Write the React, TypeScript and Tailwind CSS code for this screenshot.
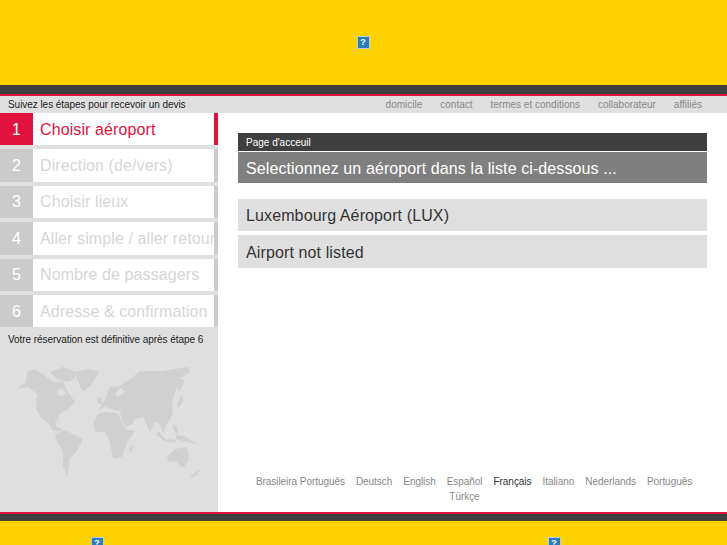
const font = "font-['Liberation_Sans',Arial,sans-serif]";

const steps = [
  "Choisir aéroport",
  "Direction (de/vers)",
  "Choisir lieux",
  "Aller simple / aller retour",
  "Nombre de passagers",
  "Adresse & confirmation",
];

const navLinks = ["domicile", "contact", "termes et conditions", "collaborateur", "affiliés"];

const languages = [
  "Brasileira Português",
  "Deutsch",
  "English",
  "Español",
  "Français",
  "Italiano",
  "Nederlands",
  "Português",
];

function BrokenImage() {
  return (
    <span className="flex h-[13px] w-[13px] shrink-0 items-center justify-center border border-[#b4cde0] bg-[#2a7cbd] text-[9px] leading-none font-bold text-white">
      ?
    </span>
  );
}

function WorldMap() {
  return (
    <svg viewBox="0 348 218 164" className="h-[164px] w-[218px]" fill="#d0d0d0">
      {/* north america */}
      <path d="M17 389 25 384 28 372 35 370 48 379 55 383 63 382 66 390 75 403 68 410 60 415 55 423 57 428 63 430 60 432 53 432 49 425 42 420 36 410 37 395 28 388Z" />
      <path d="M50 373 63 368 75 372 75 380 67 383 57 380Z" />
      <path d="M75 373 90 370 99 373 92 385 83 393 78 383Z" />
      <path d="M50 418 57 420 60 423 54 421Z" />
      {/* south america */}
      <path d="M55 435 65 431 83 440 78 450 70 460 67 477 63 467 63 452 57 443Z" />
      {/* eurasia */}
      <path d="M98 412 105 400 110 388 120 387 133 378 140 372 162 372 188 368 190 373 180 380 185 380 180 393 177 388 172 403 173 415 165 428 164 436 160 425 155 423 150 433 143 418 135 420 133 425 125 428 120 415 112 410 105 408Z" />
      <path d="M97 400 101 398 102 405 98 405Z" />
      <path d="M178 403 182 396 183 403 177 410Z" />
      {/* africa */}
      <path d="M93 425 98 415 110 412 118 415 125 430 135 432 127 443 122 458 113 460 110 443 105 433 96 433Z" />
      <path d="M130 448 133 445 132 451 129 453Z" />
      {/* islands */}
      <path d="M158 432 167 442 164 442 157 436Z" />
      <path d="M167 440 176 441 176 444 168 443Z" />
      <path d="M173 425 177 427 178 435 174 432Z" />
      <path d="M176 436 184 437 197 445 186 443 176 440Z" />
      {/* australia */}
      <path d="M167 458 175 450 187 448 189 460 183 469 175 462 168 463Z" />
      <path d="M190 478 200 470 198 475 192 479Z" />
      {/* inland water */}
      <path d="M57 391 62 389 66 394 62 397 58 396Z" fill="#dfdfdf" />
      <path d="M105 410 120 412 122 414 108 413Z" fill="#dfdfdf" />
      <path d="M120 388 125 393 118 398 115 396Z" fill="#dfdfdf" />
    </svg>
  );
}

export default function App() {
  return (
    <div className={`${font} flex h-[545px] w-[727px] flex-col overflow-hidden bg-white`}>
      {/* header */}
      <div className="flex h-[85px] shrink-0 items-center justify-center bg-[#ffd200] pr-px">
        <BrokenImage />
      </div>
      <div className="h-[9px] shrink-0 bg-[#3f3f3f]" />
      <div className="h-[2px] shrink-0 bg-[#e2123f]" />

      <div className="flex h-[17px] shrink-0 items-center justify-between bg-[#dfdfdf] pr-[25px] pl-2 text-[10px]">
        <span className="tracking-[-0.05px] text-[#222]">Suivez les étapes pour recevoir un devis</span>
        <nav className="flex gap-[18px] text-[#888]">
          {navLinks.map((link) => (
            <span key={link}>{link}</span>
          ))}
        </nav>
      </div>

      <div className="flex min-h-0 flex-1">
        {/* steps */}
        <aside className="flex w-[218px] shrink-0 flex-col bg-[#dfdfdf]">
          <div className="flex flex-col gap-[4px]">
            {steps.map((step, i) => (
              <div
                key={step}
                className={`flex h-[32.4px] overflow-hidden border-r-4 bg-white ${
                  i === 0 ? "border-[#e2123f]" : "border-[#cbcbcb]"
                }`}
              >
                <span
                  className={`flex w-[33px] shrink-0 items-center justify-center pt-px text-base text-white ${
                    i === 0 ? "bg-[#e2123f]" : "bg-[#cbcbcb]"
                  }`}
                >
                  {i + 1}
                </span>
                <span
                  className={`flex items-center pt-px pl-[7px] text-base tracking-[0.1px] whitespace-nowrap ${
                    i === 0 ? "text-[#e2123f]" : "text-[#d6d6d6]"
                  }`}
                >
                  {step}
                </span>
              </div>
            ))}
          </div>
          <p className="mt-[6px] pl-2 text-[10px] leading-[14px] tracking-[-0.06px] text-[#222]">
            Votre réservation est définitive après étape 6
          </p>
          <WorldMap />
        </aside>

        {/* main panel */}
        <main className="flex flex-1 flex-col px-5 pt-5 pb-2">
          <div className="flex h-[18px] items-center bg-[#3f3f3f] pl-2 text-[10px] text-white">Page d'acceuil</div>
          <div className="mt-px flex h-[31px] items-center bg-[#7f7f7f] pt-[2px] pl-2 text-base tracking-[0.1px] text-white">
            Selectionnez un aéroport dans la liste ci-dessous ...
          </div>
          <div className="mt-4 flex flex-col gap-[4px]">
            <div className="flex h-[32.4px] items-center bg-[#dfdfdf] pt-[2px] pl-2 text-base tracking-[0.12px] text-[#333]">
              Luxembourg Aéroport (LUX)
            </div>
            <div className="flex h-[32.4px] items-center bg-[#dfdfdf] pt-[2px] pl-2 text-base tracking-[0.12px] text-[#333]">
              Airport not listed
            </div>
          </div>
          <div className="mt-auto ml-[3px] flex flex-wrap justify-center gap-x-[11px] text-[10px] leading-[15px] tracking-[-0.05px] text-[#888]">
            {languages.map((lang) => (
              <span key={lang} className={lang === "Français" ? "text-[#333]" : ""}>
                {lang}
              </span>
            ))}
            <span className="mr-[19px] basis-full text-center">Türkçe</span>
          </div>
        </main>
      </div>

      {/* footer */}
      <div className="h-[2px] shrink-0 bg-[#e2123f]" />
      <div className="h-[7px] shrink-0 bg-[#3f3f3f]" />
      <div className="flex h-[24px] shrink-0 bg-[#ffd200]">
        <div className="flex w-[194px] justify-center pt-4">
          <BrokenImage />
        </div>
        <div className="flex flex-1 justify-center pt-4 pl-[187px]">
          <BrokenImage />
        </div>
      </div>
    </div>
  );
}
